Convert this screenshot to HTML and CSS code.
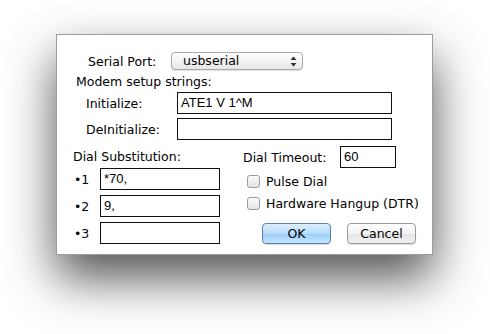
FILE: index.html
```html
<!DOCTYPE html>
<html lang="en">
  <head>
    <meta charset="UTF-8" />
    <title>Modem Settings</title>
    <link rel="stylesheet" href="styles.css">
  </head>
  <body>
    <div class="window">
      <div class="port-row">
        <span class="port-label">Serial Port:</span>
        <div class="popup">
          <span>usbserial</span>
          <svg class="popup-arrows" width="7" height="11" viewBox="0 0 7 11">
            <path d="M3.5 0.5 L6.5 4 L0.5 4 Z" fill="#333" />
            <path d="M3.5 10.5 L6.5 7 L0.5 7 Z" fill="#333" />
          </svg>
        </div>
      </div>
      <div class="modem-title">Modem setup strings:</div>
      <div class="string-row">
        <span class="string-label">Initialize:</span>
        <div class="field field-wide">ATE1 V 1^M</div>
      </div>
      <div class="string-row">
        <span class="string-label">DeInitialize:</span>
        <div class="field field-wide"></div>
      </div>
      <div class="bottom">
        <div class="subst">
          <div class="subst-title">Dial Substitution:</div>
          <div class="subst-row">
            <span class="bullet">&bull;1</span>
            <div class="field field-subst">*70,</div>
          </div>
          <div class="subst-row">
            <span class="bullet">&bull;2</span>
            <div class="field field-subst">9,</div>
          </div>
          <div class="subst-row">
            <span class="bullet">&bull;3</span>
            <div class="field field-subst"></div>
          </div>
        </div>
        <div class="options">
          <div class="timeout-row">
            <span class="timeout-label">Dial Timeout:</span>
            <div class="field field-timeout">60</div>
          </div>
          <label class="check-row"><span class="checkbox"></span>Pulse Dial</label>
          <label class="check-row"><span class="checkbox"></span>Hardware Hangup (DTR)</label>
          <div class="buttons">
            <button class="btn btn-default">OK</button>
            <button class="btn">Cancel</button>
          </div>
        </div>
      </div>
    </div>
  </body>
</html>
```

FILE: styles.css
```css
body {
  margin: 0;
  padding: 0;
  width: 490px;
  height: 334px;
  overflow: hidden;
  background: #fff;
  font-family: "DejaVu Sans", sans-serif;
  font-size: 12.5px;
  color: #000;
}
.window {
  width: 377px;
  height: 221px;
  margin: 34px 0 0 56px;
  padding-top: 17px;
  box-sizing: border-box;
  border: 1px solid #9c9c9c;
  background: #fff;
  box-shadow: 0 23px 46px rgba(0, 0, 0, 0.68);
}
.port-row {
  display: flex;
  align-items: center;
  height: 18px;
}
.port-label {
  margin-left: 31px;
  width: 83px;
}
.popup {
  width: 132px;
  height: 18px;
  box-sizing: border-box;
  border: 1px solid #a8a8a8;
  border-radius: 4px;
  background: linear-gradient(#ffffff, #f4f4f4 50%, #e6e6e6);
  box-shadow: 0 1px 1px rgba(0, 0, 0, 0.12);
  display: flex;
  align-items: center;
  justify-content: space-between;
  padding: 0 5px 0 11px;
}
.popup span {
  line-height: 16px;
}
.modem-title {
  margin: 4px 0 2px 19px;
  line-height: 16px;
}
.string-row {
  display: flex;
  align-items: center;
  height: 22px;
  margin-bottom: 4px;
}
.string-label {
  margin-left: 29px;
  width: 91px;
}
.field {
  height: 22px;
  box-sizing: border-box;
  border: 1px solid #111;
  background: #fff;
  font-family: "Liberation Sans", Arial, sans-serif;
  font-size: 13px;
  line-height: 20px;
  padding-left: 3px;
}
.field-wide {
  width: 215px;
}
.bottom {
  display: flex;
  margin-top: 6px;
}
.subst {
  width: 186px;
}
.subst-title {
  margin-left: 16px;
  line-height: 22px;
}
.subst-row {
  display: flex;
  align-items: center;
  margin-bottom: 5px;
}
.bullet {
  margin-left: 17px;
  width: 26px;
}
.field-subst {
  width: 120px;
}
.options {
  flex: 1;
}
.timeout-row {
  display: flex;
  align-items: center;
}
.timeout-label {
  width: 97px;
}
.field-timeout {
  width: 56px;
}
.check-row {
  display: flex;
  align-items: center;
  height: 22px;
  margin-left: 4px;
}
.check-row:first-of-type {
  margin-top: 2px;
}
.checkbox {
  width: 13px;
  height: 13px;
  box-sizing: border-box;
  border: 1px solid #9a9a9a;
  border-radius: 3px;
  background: linear-gradient(#fbfbfb, #e4e4e4);
  box-shadow: inset 0 1px 0 #fff;
  margin-right: 6px;
}
.buttons {
  display: flex;
  gap: 16px;
  margin: 9px 0 0 19px;
}
.btn {
  width: 69px;
  height: 21px;
  box-sizing: border-box;
  border: 1px solid #9b9b9b;
  border-radius: 4px;
  background: linear-gradient(#ffffff, #f3f3f3 50%, #e5e5e5 51%, #f0f0f0);
  box-shadow: 0 1px 1px rgba(0, 0, 0, 0.15);
  font-family: "DejaVu Sans", sans-serif;
  font-size: 12.5px;
  color: #000;
  padding: 0;
}
.btn-default {
  border-color: #5b7fb0;
  background: linear-gradient(#dcefff, #b8dcfb 50%, #9acdf8 51%, #c4e6ff);
}
```
